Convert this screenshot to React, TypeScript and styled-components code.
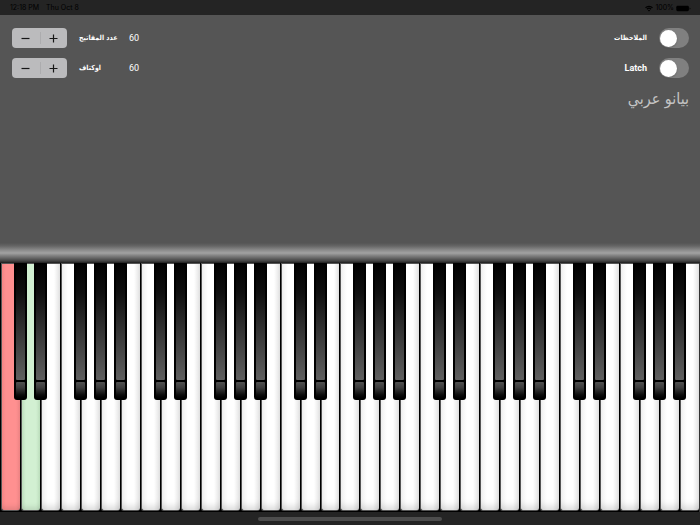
import React, { useState } from "react";
import styled, { createGlobalStyle, css } from "styled-components";

const GlobalStyle = createGlobalStyle`
  *, *::before, *::after { box-sizing: border-box; }
  body {
    margin: 0;
    background: #242424;
    font-family: "Liberation Sans", "DejaVu Sans", sans-serif;
  }
`;

const Page = styled.div`
  display: grid;
  grid-template-rows: 15px minmax(110px, 1fr) minmax(249px, 47vh) 13px;
  min-height: 100vh;
`;

const StatusBar = styled.header`
  display: flex;
  align-items: center;
  justify-content: space-between;
  padding: 1px 9px 0 10px;
  background: #242424;
  color: #000;
  font: 7px/14px Inter, "Liberation Sans", sans-serif;
`;

const StatusGroup = styled.div<{ $gap: number }>`
  display: flex;
  align-items: center;
  gap: ${({ $gap }) => $gap}px;
`;

const Panel = styled.main`
  display: flex;
  justify-content: space-between;
  align-items: flex-start;
  padding: 13px 11px 24px 12px;
  color: #fff;
  background:
    linear-gradient(
      #555 0, #666 3px, #8a8a8a 7px, #a2a2a2 10px,
      #898989 12px, #666 15px, #424242 18px, #1c1c1c 20px
    ) bottom / 100% 20px no-repeat,
    #555;
`;

const Column = styled.div<{ $end?: boolean }>`
  display: flex;
  flex-direction: column;
  align-items: ${({ $end }) => ($end ? "flex-end" : "flex-start")};
  gap: 10px;
`;

const Setting = styled.div`
  display: flex;
  align-items: center;
  height: 20px;
`;

const StepperBox = styled.div`
  display: flex;
  width: 55px;
  height: 20px;
  margin-right: 12px;
  border-radius: 4px;
  background: #bbbbbd;
`;

const StepButton = styled.button`
  display: flex;
  flex: 1;
  align-items: center;
  justify-content: center;
  padding: 0;
  border: 0;
  background: none;
  color: #161616;

  & + & {
    background: linear-gradient(#acacae, #acacae) left center / 1px 12px no-repeat;
  }
`;

const arabicLabel = css`
  font: bold 7px/20px "DejaVu Sans Condensed", "DejaVu Sans", sans-serif;
`;

const Name = styled.span`
  width: 50px;
  ${arabicLabel}
  white-space: nowrap;
`;

const Value = styled.output`
  font: 9px/20px Roboto, "Liberation Sans", sans-serif;
`;

const SwitchLabel = styled.label`
  display: flex;
  align-items: center;
  gap: 12px;
  height: 20px;
  font: bold 9px/20px Roboto, "Liberation Sans", sans-serif;

  [lang="ar"] { ${arabicLabel} }
`;

const Switch = styled.input`
  display: flex;
  align-items: center;
  appearance: none;
  width: 30px;
  height: 20px;
  margin: 0;
  padding: 0 1px;
  border-radius: 10px;
  background: #808080;

  &::before {
    content: "";
    width: 17px;
    height: 17px;
    border-radius: 50%;
    background: #fff;
    box-shadow: 0 1px 2px #0003;
  }
  &:checked {
    justify-content: flex-end;
    background: #34c759;
  }
`;

const Title = styled.h1`
  margin: 0;
  color: #c4c4c4;
  font: 400 16px/22px "DejaVu Sans Condensed", "DejaVu Sans", sans-serif;
`;

const Keyboard = styled.section`
  display: flex;
  background: #000;
`;

const KeySlot = styled.div`
  position: relative;
  display: flex;
  flex: 1;

  &:last-child { border-right: 1px solid #333; }
`;

const tones = {
  plain: css`
    background: linear-gradient(90deg, #f0f0f0, #fff 6px, #fff 12px, #e2e2e2);
    box-shadow: inset 0 -9px 7px -5px #0002;
  `,
  red: css`
    background: linear-gradient(90deg, #f88787, #ff9090 4px, #ff9090 14px, #ee8585);
    box-shadow: inset 0 -6px 6px -4px #0002;
  `,
  green: css`
    background: linear-gradient(90deg, #bfe0bf, #d2f0d2 4px, #d2f0d2 14px, #bddfbd);
    box-shadow: inset 0 -6px 6px -4px #0002;
  `,
};

const WhiteKey = styled.button<{ $tone: keyof typeof tones }>`
  flex: 1;
  margin: 0 0 1px 1px;
  padding: 0;
  border: 0 solid #555;
  border-width: 1px 0 1px 1px;
  border-radius: 0 0 3px 3px;
  ${({ $tone }) => tones[$tone]}
`;

const BlackKey = styled.button`
  position: absolute;
  z-index: 1;
  top: 0;
  right: -7px;
  display: flex;
  flex-direction: column;
  gap: 2px;
  width: 13px;
  height: 55%;
  padding: 0 2px 2px;
  border: 0;
  border-radius: 0 0 3px 3px;
  background: #000;

  &::before {
    content: "";
    flex: 1;
    width: 100%;
    border-radius: 0 0 1px 1px;
    background: linear-gradient(#000, #0e0e0e 25%, #303030 55%, #606060);
  }
  &::after {
    content: "";
    width: 100%;
    height: 16px;
    border-radius: 1px 1px 2px 2px;
    background: linear-gradient(#505050, #3c3c3c 35%, #0c0c0c 80%, #000);
  }
`;

const Footer = styled.footer`
  display: flex;
  align-items: center;
  justify-content: center;
  background: #242424;
`;

const HomeIndicator = styled.div`
  width: 26.4%;
  height: 4px;
  border-radius: 2px;
  background: #4d4d4d;
`;

function Stepper({ name }: { name: string }) {
  const [value, setValue] = useState(60);
  return (
    <Setting role="group" aria-label={name}>
      <StepperBox>
        <StepButton aria-label={`${name} −`} onClick={() => setValue(value - 1)}>
          <svg width="9" height="9" viewBox="0 0 9 9" stroke="currentColor" strokeWidth="1.2">
            <path d="M.5 4.5h8" />
          </svg>
        </StepButton>
        <StepButton aria-label={`${name} +`} onClick={() => setValue(value + 1)}>
          <svg width="9" height="9" viewBox="0 0 9 9" stroke="currentColor" strokeWidth="1.2">
            <path d="M.5 4.5h8M4.5.5v8" />
          </svg>
        </StepButton>
      </StepperBox>
      <Name lang="ar">{name}</Name>
      <Value>{value}</Value>
    </Setting>
  );
}

const WHITE_KEYS = 35;
const SHARP_DEGREES = [0, 1, 3, 4, 5];
const toneOf = (i: number) => (i === 0 ? "red" : i === 1 ? "green" : "plain");

export default function App() {
  return (
    <Page>
      <GlobalStyle />
      <StatusBar>
        <StatusGroup $gap={7}>
          <span>12:18 PM</span>
          <span>Thu Oct 8</span>
        </StatusGroup>
        <StatusGroup $gap={2}>
          <svg width="8" height="7" viewBox="0 0 16 13" fill="none" stroke="#000" strokeWidth="2.4">
            <path d="M1 5a10 10 0 0 1 14 0M3.8 8a6 6 0 0 1 8.4 0" />
            <path d="M8 12.5 5.6 10a3.4 3.4 0 0 1 4.8 0z" fill="#000" stroke="none" />
          </svg>
          <span>100%</span>
          <svg width="15" height="7" viewBox="0 0 15 7">
            <rect x=".3" y=".8" width="12.6" height="5.4" rx="1.4" fill="#000" />
            <path d="M13.6 2.4v2.2q.9-.3.9-1.1t-.9-1.1" fill="#000" />
          </svg>
        </StatusGroup>
      </StatusBar>
      <Panel>
        <Column>
          <Stepper name="عدد المفاتيح" />
          <Stepper name="اوكتاف" />
        </Column>
        <Column $end>
          <SwitchLabel>
            <span lang="ar">الملاحظات</span>
            <Switch type="checkbox" role="switch" />
          </SwitchLabel>
          <SwitchLabel>
            Latch
            <Switch type="checkbox" role="switch" />
          </SwitchLabel>
          <Title lang="ar" dir="rtl">بيانو عربي</Title>
        </Column>
      </Panel>
      <Keyboard aria-label="بيانو">
        {Array.from({ length: WHITE_KEYS }, (_, i) => (
          <KeySlot key={i}>
            <WhiteKey $tone={toneOf(i)} aria-label={`${i + 1}`} />
            {SHARP_DEGREES.includes(i % 7) && <BlackKey aria-label={`${i + 1}♯`} />}
          </KeySlot>
        ))}
      </Keyboard>
      <Footer>
        <HomeIndicator />
      </Footer>
    </Page>
  );
}
